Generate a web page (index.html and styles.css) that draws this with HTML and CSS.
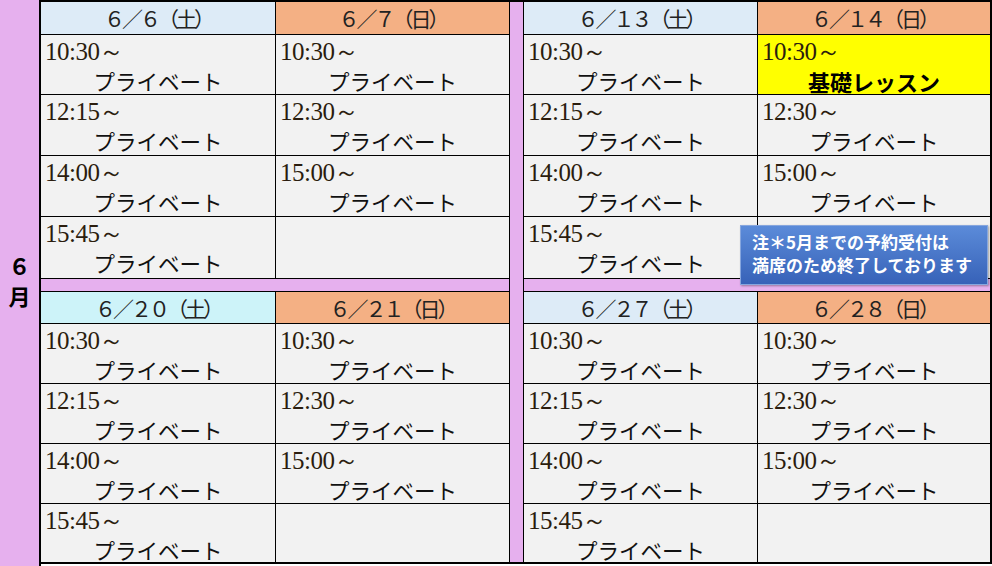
FILE: index.html
```html
<!DOCTYPE html>
<html lang="ja">
<head>
<meta charset="utf-8">
<title>6月 スケジュール</title>
<link rel="stylesheet" href="styles.css">
</head>
<body>
<div class="sheet">
  <div class="month"><span>６</span><span>月</span></div>
  <div class="grid">
    <div class="vsep"></div>

    <div class="hd sat">６／６（土）</div>
    <div class="hd sun">６／７（日）</div>
    <div class="hd sat">６／１３（土）</div>
    <div class="hd sun">６／１４（日）</div>

    <div class="c"><div class="t">10:30～</div><div class="k">プライベート</div></div>
    <div class="c"><div class="t">10:30～</div><div class="k">プライベート</div></div>
    <div class="c"><div class="t">10:30～</div><div class="k">プライベート</div></div>
    <div class="c y"><div class="t">10:30～</div><div class="k b">基礎レッスン</div></div>

    <div class="c"><div class="t">12:15～</div><div class="k">プライベート</div></div>
    <div class="c"><div class="t">12:30～</div><div class="k">プライベート</div></div>
    <div class="c"><div class="t">12:15～</div><div class="k">プライベート</div></div>
    <div class="c"><div class="t">12:30～</div><div class="k">プライベート</div></div>

    <div class="c"><div class="t">14:00～</div><div class="k">プライベート</div></div>
    <div class="c"><div class="t">15:00～</div><div class="k">プライベート</div></div>
    <div class="c"><div class="t">14:00～</div><div class="k">プライベート</div></div>
    <div class="c"><div class="t">15:00～</div><div class="k">プライベート</div></div>

    <div class="c"><div class="t">15:45～</div><div class="k">プライベート</div></div>
    <div class="c"></div>
    <div class="c"><div class="t">15:45～</div><div class="k">プライベート</div></div>
    <div class="c"></div>

    <div class="hsep"></div>
    <div class="hsep"></div>

    <div class="hd cyan">６／２０（土）</div>
    <div class="hd sun">６／２１（日）</div>
    <div class="hd sat">６／２７（土）</div>
    <div class="hd sun">６／２８（日）</div>

    <div class="c"><div class="t">10:30～</div><div class="k">プライベート</div></div>
    <div class="c"><div class="t">10:30～</div><div class="k">プライベート</div></div>
    <div class="c"><div class="t">10:30～</div><div class="k">プライベート</div></div>
    <div class="c"><div class="t">10:30～</div><div class="k">プライベート</div></div>

    <div class="c"><div class="t">12:15～</div><div class="k">プライベート</div></div>
    <div class="c"><div class="t">12:30～</div><div class="k">プライベート</div></div>
    <div class="c"><div class="t">12:15～</div><div class="k">プライベート</div></div>
    <div class="c"><div class="t">12:30～</div><div class="k">プライベート</div></div>

    <div class="c"><div class="t">14:00～</div><div class="k">プライベート</div></div>
    <div class="c"><div class="t">15:00～</div><div class="k">プライベート</div></div>
    <div class="c"><div class="t">14:00～</div><div class="k">プライベート</div></div>
    <div class="c"><div class="t">15:00～</div><div class="k">プライベート</div></div>

    <div class="c"><div class="t">15:45～</div><div class="k">プライベート</div></div>
    <div class="c"></div>
    <div class="c"><div class="t">15:45～</div><div class="k">プライベート</div></div>
    <div class="c"></div>
  </div>
  <div class="note"><div>注＊5月までの予約受付は</div><div>満席のため終了しております</div></div>
</div>
</body>
</html>
```

FILE: styles.css
```css
html, body {
  margin: 0;
  background: #ffffff;
}

.sheet {
  position: relative;
  display: flex;
  align-items: flex-start;
  width: 992px;
  height: 566px;
  font-family: "Noto Sans CJK JP", sans-serif;
  color: #111;
}

.month {
  flex: none;
  width: 41px;
  height: 566px;
  box-sizing: border-box;
  padding-bottom: 6px;
  background: #e6b0ee;
  border-right: 2px solid #000;
  display: flex;
  flex-direction: column;
  align-items: center;
  justify-content: center;
  font-weight: 700;
  font-size: 22px;
  line-height: 30px;
  color: #000;
}

.grid {
  flex: none;
  display: grid;
  grid-template-columns: 234px 233px 13px 233px 232px;
  grid-template-rows: 32px 59px 60px 60px 61px 12px 31px 59px 59px 59px 58px;
  gap: 1px;
  background: #000;
  border-top: 2px solid #000;
  border-right: 2px solid #000;
  border-bottom: 2px solid #000;
}

.vsep {
  grid-column: 3;
  grid-row: 1 / -1;
  background: #e6b0ee;
}

.hsep {
  grid-column: span 2;
  background: #e6b0ee;
}

.hd {
  text-align: center;
  font-size: 21px;
  letter-spacing: -3px;
  line-height: 29px;
  padding-top: 2px;
  color: #222;
}

.sat { background: #ddebf7; }
.sun { background: #f4b084; }
.cyan { background: #cdf3f9; }

.c {
  background: #f2f2f2;
  padding-top: 2px;
}

.c.y { background: #ffff00; }

.t {
  font-family: "Liberation Serif", serif;
  font-size: 25px;
  letter-spacing: -0.5px;
  line-height: 30px;
  height: 30px;
  padding-left: 4px;
  color: #2b1d0e;
}

.k {
  text-align: center;
  font-size: 21.5px;
  line-height: 28px;
  color: #111;
}

.k.b {
  font-weight: 700;
  font-size: 22px;
  color: #000;
}

.note {
  position: absolute;
  left: 740px;
  top: 225px;
  width: 248px;
  height: 60px;
  box-sizing: border-box;
  padding: 4px 0 0 11px;
  background: linear-gradient(#5b8bd9, #3762b8);
  border: 1px solid #86a6de;
  box-shadow: 1px 1px 2px rgba(0, 0, 0, 0.35);
  color: #fff;
  font-weight: 700;
  font-size: 17px;
  line-height: 23px;
  white-space: nowrap;
}
```
